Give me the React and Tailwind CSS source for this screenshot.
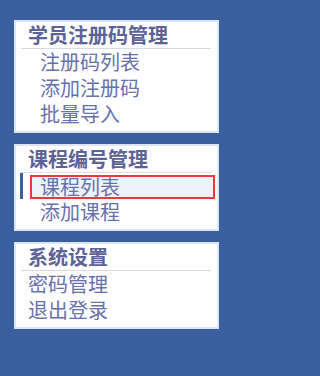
import React from "react";

const font = { fontFamily: '"Noto Sans CJK SC", "Noto Sans", sans-serif' };

function Box({ title, items, indent = true, className = "" }) {
  return (
    <div className={"w-[205px] border-2 border-[#dde4f3] bg-white pb-[4px] " + className}>
      <div className="h-[26px] pl-[12px] text-[20px] leading-[26px] font-bold text-[#5c6396]">
        {title}
      </div>
      <div className="ml-[5px] mr-[6px] h-px bg-[#d7dbe3]" />
      {items.map((it, i) =>
        it.active ? (
          <div key={i} className="ml-[4px] h-[26px] border-l-[3px] border-[#3a5f9e] pl-[7px] pr-[2px] pt-[2px]">
            <div className="h-[24px] border-2 border-[#f03838] bg-[#eef2fb] pl-[8px] text-[20px] leading-[19px] text-[#6772aa]">
              {it.label}
            </div>
          </div>
        ) : (
          <div
            key={i}
            className={
              "h-[26px] text-[20px] leading-[26px] text-[#6772aa] " +
              (indent ? "pl-[24px]" : "pl-[12px]")
            }
          >
            {it.label}
          </div>
        )
      )}
    </div>
  );
}

export default function App() {
  return (
    <div className="w-full min-h-screen h-[376px] bg-[#3a5f9e] pl-[14px] pt-[20px] overflow-hidden" style={font}>
      <Box
        title="学员注册码管理"
        items={[{ label: "注册码列表" }, { label: "添加注册码" }, { label: "批量导入" }]}
      />
      <Box
        className="mt-[11px]"
        title="课程编号管理"
        items={[{ label: "课程列表", active: true }, { label: "添加课程" }]}
      />
      <Box
        className="mt-[11px]"
        title="系统设置"
        indent={false}
        items={[{ label: "密码管理" }, { label: "退出登录" }]}
      />
    </div>
  );
}
